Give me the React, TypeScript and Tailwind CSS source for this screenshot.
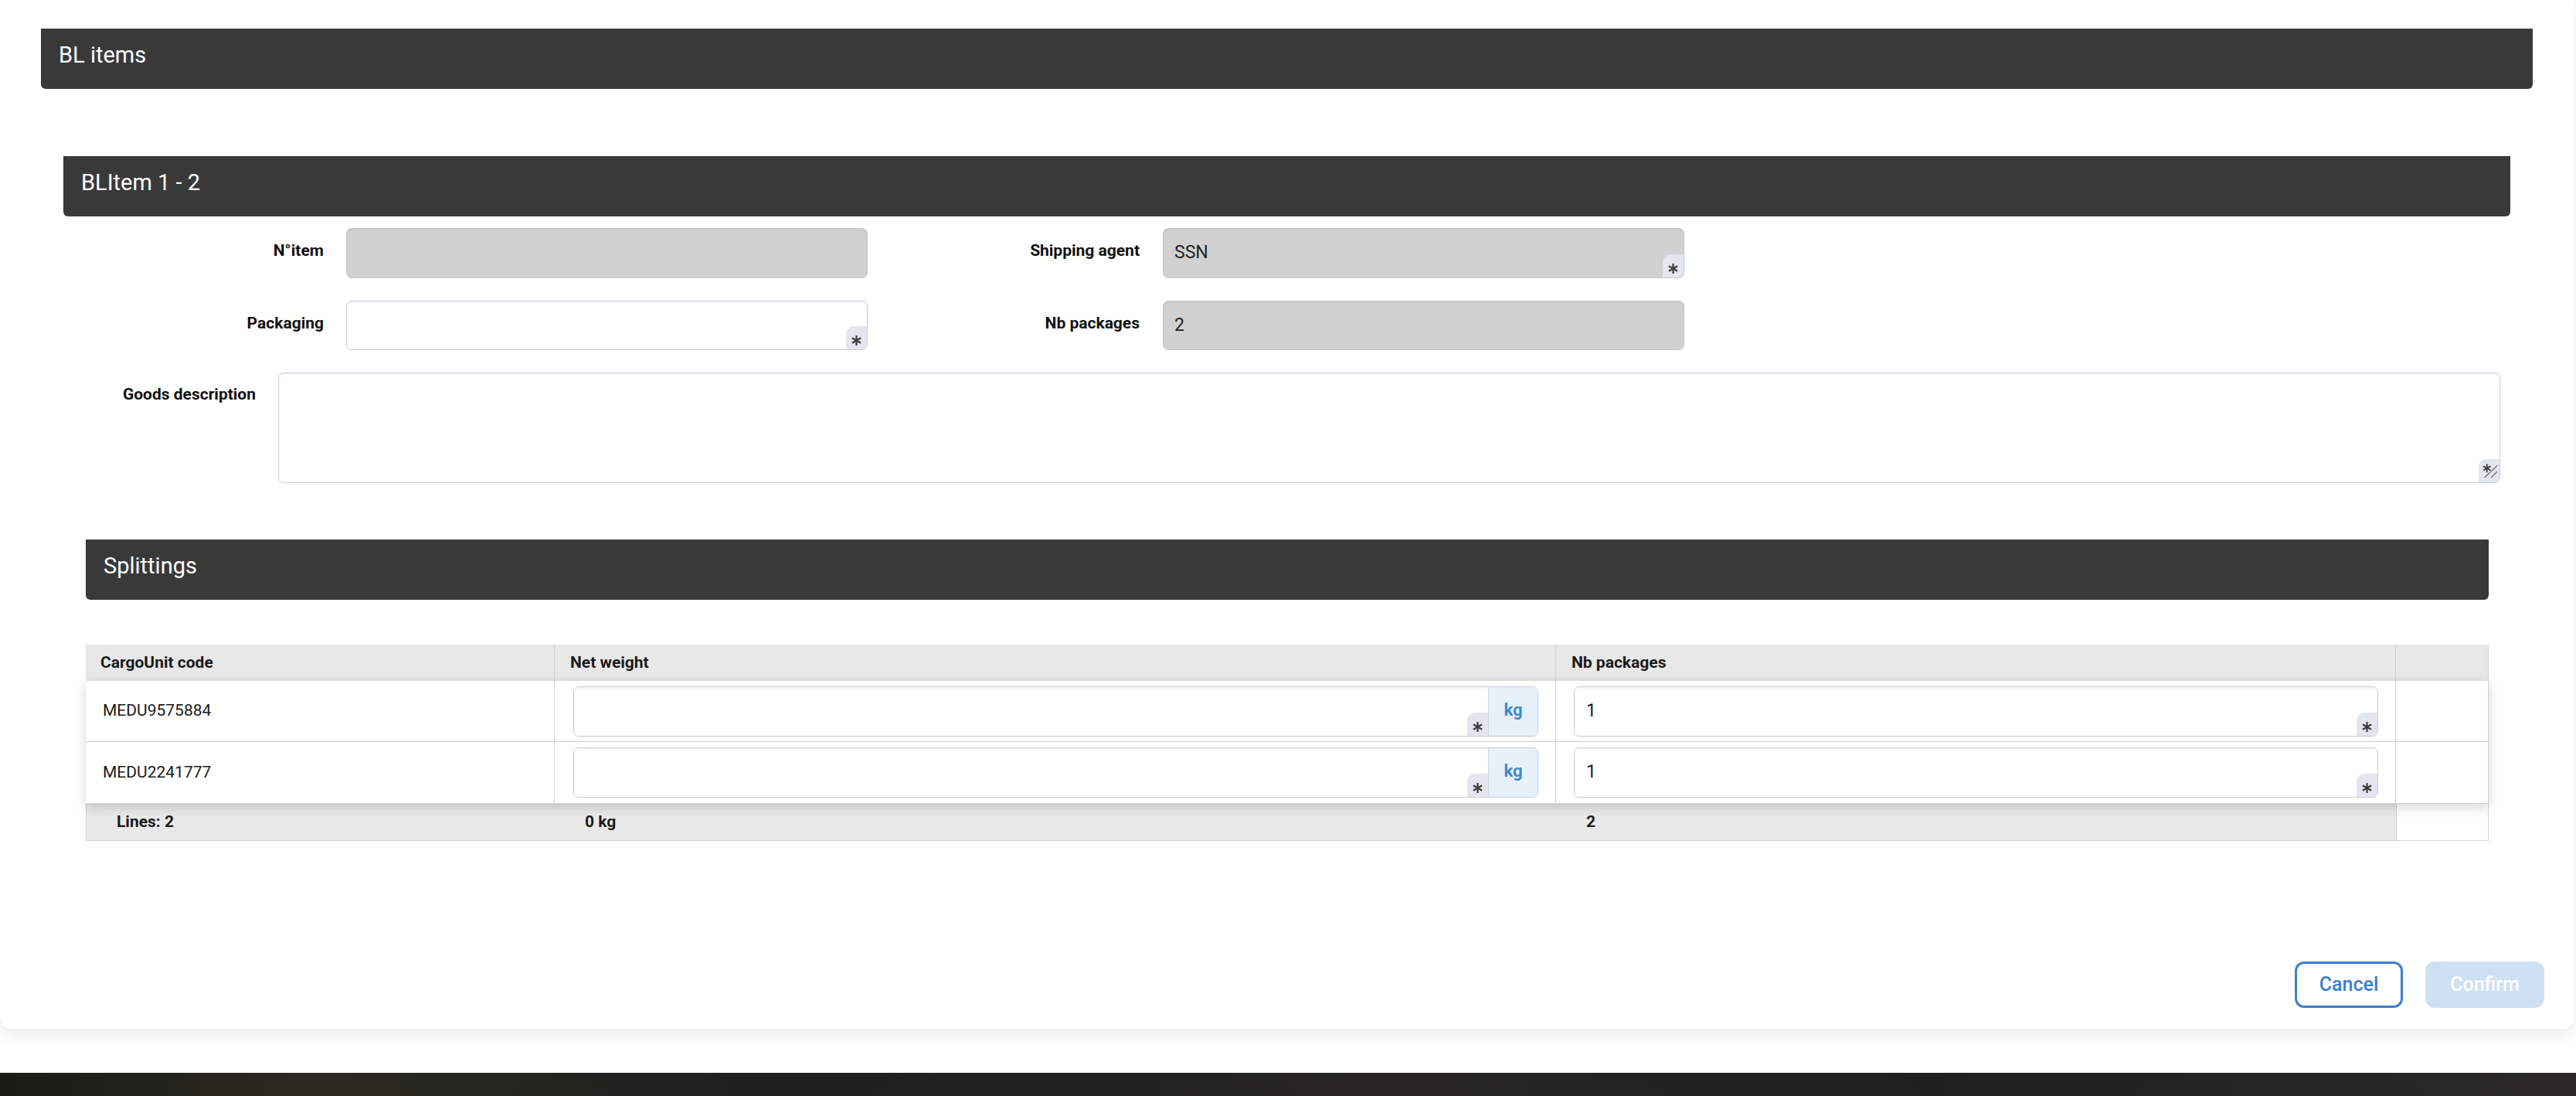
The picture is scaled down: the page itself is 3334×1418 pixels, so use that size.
import React from "react"

const font = "font-['Roboto','Liberation_Sans',sans-serif]"

function Asterisk() {
  return (
    <svg width="13" height="13" viewBox="0 0 10 10" className="block">
      <g stroke="#3c3c3c" strokeWidth="1.7" strokeLinecap="butt">
        <line x1="5" y1="0" x2="5" y2="10" />
        <line x1="0.7" y1="2.5" x2="9.3" y2="7.5" />
        <line x1="0.7" y1="7.5" x2="9.3" y2="2.5" />
      </g>
    </svg>
  )
}

function RequiredBadge({ grip = false }: { grip?: boolean }) {
  return (
    <div className="absolute bottom-0 right-0 w-[27px] h-[30px] bg-[#e3e6ee] rounded-tl-[10px] rounded-br-[6px] flex items-end justify-center pb-[5px]">
      {grip ? (
        <svg width="24" height="22" viewBox="0 0 22 20" className="block">
          <g stroke="#3c3c3c" strokeWidth="1.7">
            <line x1="8" y1="3" x2="8" y2="13" />
            <line x1="3.7" y1="5.5" x2="12.3" y2="10.5" />
            <line x1="3.7" y1="10.5" x2="12.3" y2="5.5" />
          </g>
          <g stroke="#555" strokeWidth="1">
            <line x1="5" y1="19" x2="20" y2="5" />
            <line x1="13" y1="19" x2="20" y2="12" />
          </g>
        </svg>
      ) : (
        <Asterisk />
      )}
    </div>
  )
}

function SectionHeader({ title }: { title: string }) {
  return (
    <div className="h-[78px] bg-[#393939] rounded-b-[6px] px-[23px] pt-[17px] text-[29px] leading-[34px] text-white">
      {title}
    </div>
  )
}

function Field({
  value,
  disabled = false,
  required = false,
  height = "h-[65px]",
}: {
  value?: string
  disabled?: boolean
  required?: boolean
  height?: string
}) {
  return (
    <div
      className={`relative w-[675px] ${height} rounded-[7px] border flex items-center px-[14px] text-[23px] text-[#222] ${
        disabled
          ? "bg-[#d1d1d1] border-[#c6c8cb] shadow-[inset_0_2px_2px_rgba(0,0,0,0.04)]"
          : "bg-white border-[#c9cdd2] shadow-[inset_0_2px_3px_rgba(0,60,140,0.05)]"
      }`}
    >
      {value}
      {required && <RequiredBadge />}
    </div>
  )
}

function Label({ text, width }: { text: string; width: string }) {
  return (
    <div className={`${width} shrink-0 text-right pt-[17px] text-[21px] leading-[25px] font-bold text-[#111]`}>
      {text}
    </div>
  )
}

const splittings = [
  { code: "MEDU9575884", packages: "1", h: "h-[79px]" },
  { code: "MEDU2241777", packages: "1", h: "h-[80px]" },
]

const cols = "grid grid-cols-[607px_1296px_1087px_120px]"

export default function App() {
  return (
    <div className={`${font} bg-white h-[1418px] overflow-hidden`}>
      {/* Modal panel */}
      <div className="w-[3331px] bg-white rounded-b-[14px] shadow-[0_8px_20px_rgba(0,0,0,0.08)] pt-[37px] pb-[27px]">
        <div className="px-[53px]">
          <SectionHeader title="BL items" />

          <div className="mt-[87px] px-[29px]">
            <SectionHeader title="BLItem 1 - 2" />

            {/* Form */}
            <div className="mt-[15px] pl-[29px] pr-[13px]">
              <div className="flex items-start">
                <Label text="N°item" width="w-[308px]" />
                <div className="ml-[29px]">
                  <Field disabled />
                </div>
                <Label text="Shipping agent" width="w-[352px]" />
                <div className="ml-[30px]">
                  <Field value="SSN" disabled required />
                </div>
              </div>
              <div className="flex items-start mt-[29px]">
                <Label text="Packaging" width="w-[308px]" />
                <div className="ml-[29px]">
                  <Field required height="h-[64px]" />
                </div>
                <Label text="Nb packages" width="w-[352px]" />
                <div className="ml-[30px]">
                  <Field value="2" disabled height="h-[64px]" />
                </div>
              </div>
              <div className="flex items-start mt-[29px]">
                <div className="w-[220px] shrink-0 text-right pt-[16px] text-[21px] leading-[25px] font-bold text-[#111]">
                  Goods description
                </div>
                <div className="relative ml-[29px] flex-1 h-[143px] rounded-[7px] border border-[#c9cdd2] bg-white shadow-[inset_0_2px_3px_rgba(0,60,140,0.05)]">
                  <RequiredBadge grip />
                </div>
              </div>
            </div>

            {/* Splittings */}
            <div className="mt-[73px] px-[29px] pr-[28px]">
              <SectionHeader title="Splittings" />

              <div className="mt-[58px] text-[21px] text-[#1a1a1a]">
                {/* header */}
                <div className={`${cols} h-[47px] bg-[#e8e8e8] font-bold`}>
                  <div className="flex items-center pl-[19px] border-r border-[#d3d3d3]">CargoUnit code</div>
                  <div className="flex items-center pl-[20px] border-r border-[#d3d3d3]">Net weight</div>
                  <div className="flex items-center pl-[20px] border-r border-[#d3d3d3]">Nb packages</div>
                  <div className="border-r border-[#d3d3d3]" />
                </div>

                {/* rows */}
                <div className="relative z-10 bg-white shadow-[0_4px_14px_rgba(0,0,0,0.18)]">
                  {splittings.map((row) => (
                    <div key={row.code} className={`${cols} ${row.h} border-b border-[#d3d3d3]`}>
                      <div className="flex items-center pl-[22px] border-r border-[#d3d3d3]">{row.code}</div>
                      <div className="flex items-center pl-[24px] pr-[22px] border-r border-[#d3d3d3]">
                        <div className="flex w-full h-[65px] rounded-[7px] border border-[#c9cdd2] overflow-hidden">
                          <div className="relative flex-1 bg-white shadow-[inset_0_2px_3px_rgba(0,60,140,0.05)]">
                            <div className="absolute bottom-0 right-0 w-[27px] h-[30px] bg-[#e3e6ee] rounded-tl-[10px] flex items-end justify-center pb-[5px]">
                              <Asterisk />
                            </div>
                          </div>
                          <div className="w-[64px] bg-[#e7f1fa] border-l border-[#d3d8de] flex items-center justify-center text-[22px] font-bold text-[#3d8bd0] pb-[4px]">
                            kg
                          </div>
                        </div>
                      </div>
                      <div className="flex items-center pl-[23px] pr-[22px] border-r border-[#d3d3d3]">
                        <div className="relative w-full h-[65px] rounded-[7px] border border-[#c9cdd2] bg-white shadow-[inset_0_2px_3px_rgba(0,60,140,0.05)] flex items-center px-[15px] text-[23px] text-[#222]">
                          {row.packages}
                          <RequiredBadge />
                        </div>
                      </div>
                      <div className="border-r border-[#d3d3d3]" />
                    </div>
                  ))}
                </div>

                {/* footer */}
                <div className={`${cols} h-[48px] font-bold`}>
                  <div className="flex items-center pl-[39px] bg-[#e8e8e8] border-b border-l border-[#d3d3d3]">Lines: 2</div>
                  <div className="flex items-center pl-[39px] bg-[#e8e8e8] border-b border-[#d3d3d3]">0 kg</div>
                  <div className="flex items-center pl-[39px] bg-[#e8e8e8] border-b border-[#d3d3d3]">2</div>
                  <div className="bg-white border-b border-l border-r border-[#d3d3d3]" />
                </div>
              </div>
            </div>
          </div>
        </div>

        {/* Actions */}
        <div className="mt-[156px] flex justify-end gap-[29px] pr-[38px]">
          <button className="w-[140px] h-[60px] rounded-[12px] border-[3px] border-[#3a80d0] bg-white text-[25px] font-medium text-[#3a80d0]">
            Cancel
          </button>
          <button className="w-[154px] h-[60px] rounded-[12px] bg-[#cfe0f3] text-[25px] font-medium text-white">
            Confirm
          </button>
        </div>
      </div>

      {/* Background photo strip */}
      <div className="mt-[57px] h-[31px] bg-[linear-gradient(90deg,#1b1b16_0%,#2a2a22_12%,#1e1e1c_30%,#262524_55%,#1f1f1f_75%,#2a2928_100%)]" />
    </div>
  )
}
